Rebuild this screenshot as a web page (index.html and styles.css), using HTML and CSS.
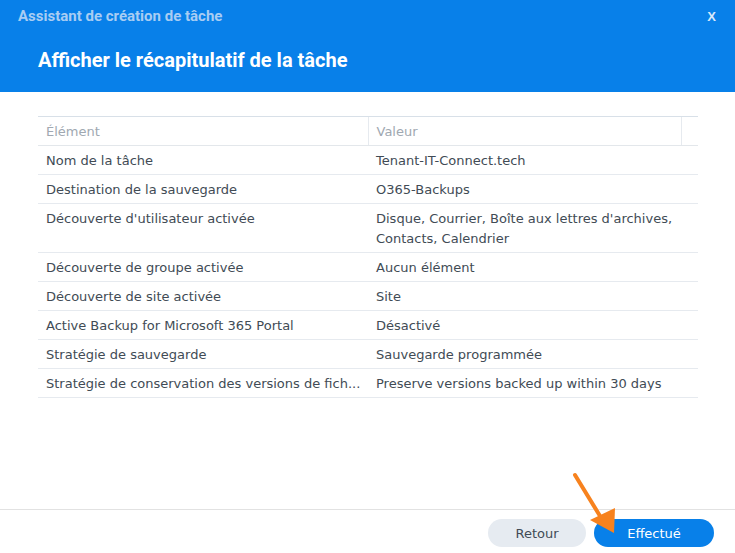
FILE: index.html
```html
<!DOCTYPE html>
<html lang="fr">
<head>
<meta charset="UTF-8">
<title>Assistant de création de tâche</title>
<link rel="stylesheet" href="styles.css">
</head>
<body>
<div class="wizard">
    <div class="wizard-header">
        <div class="title-bar">
            <span class="title">Assistant de création de tâche</span>
            <span class="close">X</span>
        </div>
        <h1>Afficher le récapitulatif de la tâche</h1>
    </div>

    <div class="wizard-body">
        <table class="summary">
            <colgroup>
                <col class="col-item">
                <col class="col-value">
                <col class="col-pad">
            </colgroup>
            <tr>
                <th>Élément</th>
                <th>Valeur</th>
                <th></th>
            </tr>
            <tr>
                <td>Nom de la tâche</td>
                <td colspan="2">Tenant-IT-Connect.tech</td>
            </tr>
            <tr>
                <td>Destination de la sauvegarde</td>
                <td colspan="2">O365-Backups</td>
            </tr>
            <tr>
                <td>Découverte d'utilisateur activée</td>
                <td colspan="2">Disque, Courrier, Boîte aux lettres d'archives, Contacts, Calendrier</td>
            </tr>
            <tr>
                <td>Découverte de groupe activée</td>
                <td colspan="2">Aucun élément</td>
            </tr>
            <tr>
                <td>Découverte de site activée</td>
                <td colspan="2">Site</td>
            </tr>
            <tr>
                <td>Active Backup for Microsoft 365 Portal</td>
                <td colspan="2">Désactivé</td>
            </tr>
            <tr>
                <td>Stratégie de sauvegarde</td>
                <td colspan="2">Sauvegarde programmée</td>
            </tr>
            <tr>
                <td>Stratégie de conservation des versions de fich...</td>
                <td colspan="2">Preserve versions backed up within 30 days</td>
            </tr>
        </table>
    </div>

    <div class="wizard-footer">
        <button type="button" class="btn btn-back">Retour</button>
        <button type="button" class="btn btn-done">Effectué</button>
    </div>

    <!-- annotation arrow pointing to the final button -->
    <svg class="arrow" width="60" height="70" viewBox="0 0 60 70">
        <line x1="5" y1="5" x2="30" y2="46" stroke="#f7821e" stroke-width="4" stroke-linecap="round"/>
        <polygon points="20,50 45,38 44,63" fill="#f7821e"/>
    </svg>
</div>
</body>
</html>
```

FILE: styles.css
```css
body {
    margin: 0;
    padding: 0;
    background-color: #fff;
    font-family: "DejaVu Sans", Verdana, sans-serif;
}

.wizard {
    position: relative;
    display: flex;
    flex-direction: column;
    height: 553px;
}

.wizard-header {
    height: 92px;
    background-color: #0880e9;
    color: #fff;
    box-sizing: border-box;
}

.title-bar {
    display: flex;
    justify-content: space-between;
    align-items: center;
    height: 32px;
    padding: 0 19px 0 18px;
}

.title {
    font-family: Roboto, "Liberation Sans", sans-serif;
    font-weight: bold;
    font-size: 15px;
    color: #a8cdf3;
}

.close {
    font-family: "Liberation Sans", Arial, sans-serif;
    font-weight: bold;
    font-size: 13px;
    color: #d8e9fb;
}

h1 {
    margin: 16px 0 0 38px;
    font-family: Roboto, "Liberation Sans", sans-serif;
    font-size: 20px;
    font-weight: bold;
    line-height: 24px;
}

.wizard-body {
    flex: 1;
    padding: 24px 37px 0 38px;
}

.summary {
    width: 660px;
    border-collapse: collapse;
    table-layout: fixed;
    font-size: 13px;
    color: #414b55;
}

.col-item {
    width: 330px;
}

.col-value {
    width: 313px;
}

.col-pad {
    width: 17px;
}

.summary th,
.summary td {
    padding: 5px 8px 3px;
    line-height: 20px;
    text-align: left;
    vertical-align: top;
    border-bottom: 1px solid #e6eaef;
}

.summary td {
    white-space: nowrap;
    overflow: hidden;
}

.summary td[colspan] {
    white-space: normal;
    padding-right: 4px;
}

.summary th {
    font-weight: normal;
    color: #a0a8b1;
    border-top: 1px solid #d8e0e8;
    border-bottom: 1px solid #e3e7eb;
}

.summary th + th {
    border-left: 1px solid #e6eaef;
}

.wizard-footer {
    display: flex;
    justify-content: flex-end;
    gap: 8px;
    height: 44px;
    box-sizing: border-box;
    padding: 9px 21px 0 0;
    border-top: 1px solid #e2e2e2;
}

.btn {
    height: 28px;
    border: none;
    border-radius: 14px;
    font-family: "DejaVu Sans", Verdana, sans-serif;
    font-size: 13px;
    cursor: pointer;
}

.btn-back {
    width: 98px;
    background-color: #e6ebf1;
    color: #414b55;
}

.btn-done {
    width: 120px;
    background-color: #0880e9;
    color: #fff;
}

.arrow {
    position: absolute;
    left: 570px;
    top: 470px;
}
```
